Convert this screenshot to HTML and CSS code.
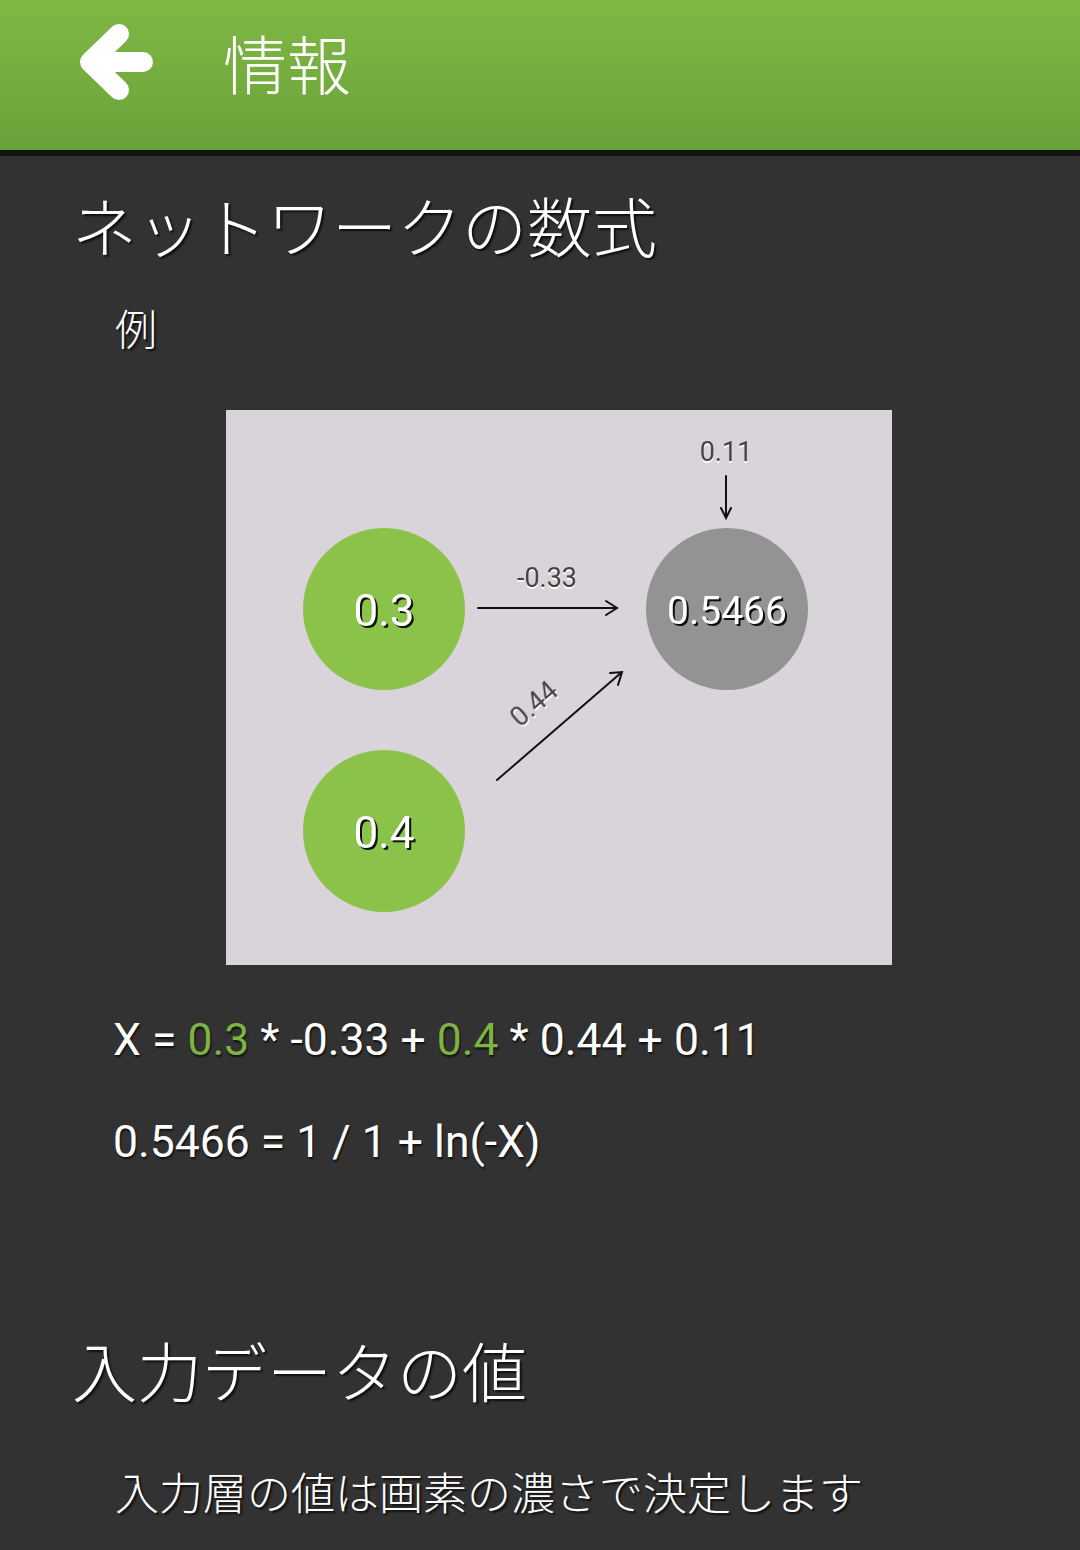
FILE: index.html
```html
<!DOCTYPE html>
<html lang="ja">
<head>
<meta charset="utf-8">
<title>情報</title>
<link rel="stylesheet" href="styles.css">
</head>
<body>
<header class="appbar">
  <svg class="back" width="80" height="90" viewBox="0 0 80 90">
    <path d="M40 18 L11 46 L40 74 M11 46 L64 46" fill="none" stroke="#fff" stroke-width="20" stroke-linecap="round" stroke-linejoin="round"/>
  </svg>
  <h1 class="appbar-title">情報</h1>
</header>
<main class="content">
  <h2 class="section-title">ネットワークの数式</h2>
  <p class="label">例</p>
  <div class="figure">
    <svg class="diagram" width="666" height="555" viewBox="0 0 666 555">
      <circle cx="158" cy="199" r="81" fill="#8bc34a"/>
      <circle cx="158" cy="421" r="81" fill="#8bc34a"/>
      <circle cx="501" cy="199" r="81" fill="#939393"/>
      <g stroke="#111" stroke-width="2" fill="none" stroke-linecap="round">
        <path d="M252 198 L391 198 M380 191 L391 198 L380 205"/>
        <path d="M500 66 L500 108 M495 98 L500 108 L505 98"/>
        <path d="M271 370 L396 262 M384 263 L396 262 L392 275"/>
      </g>
      <g class="node-text">
        <text x="158" y="216" class="big">0.3</text>
        <text x="158" y="438" class="big">0.4</text>
        <text x="501" y="214" class="mid">0.5466</text>
      </g>
      <g class="edge-text">
        <text x="321" y="177">-0.33</text>
        <text x="500" y="51">0.11</text>
        <text x="314" y="301" transform="rotate(-41 314 301)">0.44</text>
      </g>
    </svg>
  </div>
  <p class="formula">X = <span class="hl">0.3</span> * -0.33 + <span class="hl">0.4</span> * 0.44 + 0.11</p>
  <p class="formula formula-2">0.5466 = 1 / 1 + ln(-X)</p>
  <h2 class="section-title section-2">入力データの値</h2>
  <p class="body-text">入力層の値は画素の濃さで決定します</p>
</main>
</body>
</html>
```
FILE: styles.css
```css
* { box-sizing: border-box; }
html, body {
  margin: 0;
  padding: 0;
  background: #323232;
  width: 1080px;
  height: 1550px;
  overflow: hidden;
  font-family: "Noto Sans CJK JP", "Noto Sans", sans-serif;
  color: #fff;
}
.appbar {
  height: 156px;
  background: linear-gradient(#80b845, #6aa23a);
  border-bottom: 6px solid #121212;
  display: flex;
  align-items: center;
  padding-left: 79px;
  padding-bottom: 28px;
}
.back { display: block; }
.appbar-title {
  margin: 0 0 0 64px;
  font-size: 64px;
  line-height: 64px;
  font-weight: 300;
  color: #fff;
}
.content {
  display: flex;
  flex-direction: column;
  align-items: flex-start;
  padding-left: 72px;
}
.section-title {
  margin: 36px 0 0 0;
  font-size: 65px;
  line-height: 65px;
  font-weight: 300;
  color: #fff;
  text-shadow: 2px 2px 2px rgba(0,0,0,0.7);
  letter-spacing: 0;
}
.label {
  margin: 49px 0 0 43px;
  font-size: 42px;
  line-height: 42px;
  font-weight: 300;
  text-shadow: 2px 2px 2px rgba(0,0,0,0.7);
}
.figure {
  margin: 62px 0 0 154px;
  width: 666px;
  height: 555px;
  background: #d9d3da;
}
.diagram { display: block; }
.node-text text {
  font-family: Roboto, "Liberation Sans", sans-serif;
  fill: #fff;
  text-anchor: middle;
  filter: drop-shadow(2px 2px 0 rgba(0,0,0,0.9));
}
.node-text .big { font-size: 44px; }
.node-text .mid { font-size: 39px; }
.edge-text text {
  font-family: Roboto, "Liberation Sans", sans-serif;
  font-size: 27px;
  fill: #444;
  text-anchor: middle;
  filter: drop-shadow(0 2px 0 #fff);
}
.formula {
  margin: 53px 0 0 41px;
  font-family: Roboto, "Liberation Sans", sans-serif;
  font-size: 44.5px;
  line-height: 44px;
  color: #fff;
  text-shadow: 1px 2px 2px rgba(0,0,0,0.7);
  white-space: nowrap;
}
.formula-2 { margin-top: 58px; }
.hl { color: #7cb342; }
.section-2 { margin-top: 173px; }
.body-text {
  margin: 67px 0 0 43px;
  font-size: 44px;
  line-height: 44px;
  font-weight: 300;
  text-shadow: 2px 2px 2px rgba(0,0,0,0.7);
}
```
